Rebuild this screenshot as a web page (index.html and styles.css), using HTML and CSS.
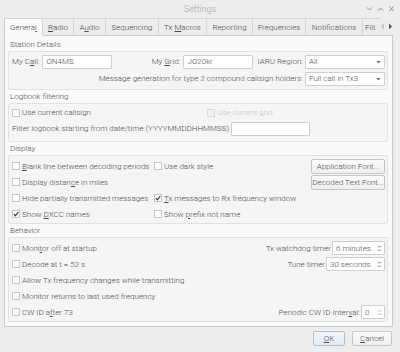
FILE: index.html
```html
<!DOCTYPE html>
<html lang="en">
<head>
    <meta charset="UTF-8">
    <title>Settings</title>
    <link rel="stylesheet" href="styles.css">
</head>
<body>
    <div class="titlebar">
        <span></span>
        <span class="title">Settings</span>
        <span class="wm">
            <svg width="7" height="6"><path d="M1 1.5 L3.5 4 L6 1.5" stroke="#8a8a8a" fill="none"/></svg>
            <svg width="7" height="6"><path d="M1 4.5 L3.5 2 L6 4.5" stroke="#8a8a8a" fill="none"/></svg>
            <svg width="7" height="6"><path d="M1.5 0.5 L5.5 5 M5.5 0.5 L1.5 5" stroke="#8a8a8a" fill="none"/></svg>
        </span>
    </div>

    <div class="tabbar">
        <div class="tab active" style="width:39px">Genera<u>l</u></div>
        <div class="tab" style="width:31px"><u>R</u>adio</div>
        <div class="tab" style="width:32px">A<u>u</u>dio</div>
        <div class="tab" style="width:53px">Sequencing</div>
        <div class="tab" style="width:48px">Tx <u>M</u>acros</div>
        <div class="tab" style="width:46px">Reporting</div>
        <div class="tab" style="width:53px">Frequencies</div>
        <div class="tab" style="width:57px">Notifications</div>
        <div class="tab cut" style="width:17px">Filt</div>
        <div class="scroller">
            <svg width="5" height="7"><path d="M4 0.5 L1 3.5 L4 6.5 Z" fill="#c4c4c4"/></svg>
            <svg width="5" height="7"><path d="M1 0.5 L4 3.5 L1 6.5 Z" fill="#555"/></svg>
        </div>
    </div>

    <div class="pane">
        <div class="section-title">Station Details</div>
        <div class="group">
            <div class="row">
                <span class="lbl">My C<u>a</u>ll:</span>
                <div class="field w-call"><span>ON4MS</span></div>
                <span class="spacer"></span>
                <span class="lbl">My <u>G</u>rid:</span>
                <div class="field w-call"><span>JO20kr</span></div>
                <span class="lbl gap-l">IARU Region:</span>
                <div class="field combo"><span>All</span> <svg width="5" height="4"><path d="M0.5 1 L4.5 1 L2.5 3.5 Z" fill="#666"/></svg></div>
            </div>
            <div class="row end">
                <span class="lbl">Message generation for type 2 compound callsign holders:</span>
                <div class="field combo"><span>Full call in Tx3</span> <svg width="5" height="4"><path d="M0.5 1 L4.5 1 L2.5 3.5 Z" fill="#666"/></svg></div>
            </div>
        </div>

        <div class="section-title">Logbook filtering</div>
        <div class="group log">
            <div class="row">
                <label class="check first-col"><span class="box"></span><span>Use current callsign</span></label>
                <label class="check disabled"><span class="box"></span><span>Use current grid</span></label>
            </div>
            <div class="row">
                <span class="lbl">Filter logbook starting from date/time (YYYYMMDDHHMMSS)</span>
                <div class="field w-date"></div>
            </div>
        </div>

        <div class="section-title">Display</div>
        <div class="group display">
            <label class="check"><span class="box"></span><span><u>B</u>lank line between decoding periods</span></label>
            <label class="check"><span class="box"></span><span>Use dark style</span></label>
            <div class="btn">Application Font...</div>

            <label class="check"><span class="box"></span><span>Display distan<u>c</u>e in miles</span></label>
            <span></span>
            <div class="btn">Decoded Text Font...</div>

            <label class="check"><span class="box"></span><span>Hide partially transmitted messages</span></label>
            <label class="check"><span class="box"><svg width="6" height="6"><path d="M0.8 3.2 L2.4 4.8 L5.3 1" stroke="#333" stroke-width="1.2" fill="none"/></svg></span><span><u>T</u>x messages to Rx frequency window</span></label>
            <span></span>

            <label class="check"><span class="box"><svg width="6" height="6"><path d="M0.8 3.2 L2.4 4.8 L5.3 1" stroke="#333" stroke-width="1.2" fill="none"/></svg></span><span>Show <u>D</u>XCC names</span></label>
            <label class="check"><span class="box"></span><span>Show <u>p</u>refix not name</span></label>
            <span></span>
        </div>

        <div class="section-title">Behavior</div>
        <div class="group behavior">
            <div class="brow">
                <label class="check"><span class="box"></span><span>Moni<u>t</u>or off at startup</span></label>
                <span class="spin-wrap"><span>Tx watchdog timer</span>
                    <span class="field spin w-watch"><span>6 minutes</span> <svg width="5" height="9"><path d="M1 3.5 L2.5 2 L4 3.5 M1 5.5 L2.5 7 L4 5.5" stroke="#777" fill="none"/></svg></span>
                </span>
            </div>
            <div class="brow">
                <label class="check"><span class="box"></span><span>Decode at t = 52 s</span></label>
                <span class="spin-wrap"><span>Tune timer</span>
                    <span class="field spin w-tune"><span>30 seconds</span> <svg width="5" height="9"><path d="M1 3.5 L2.5 2 L4 3.5 M1 5.5 L2.5 7 L4 5.5" stroke="#777" fill="none"/></svg></span>
                </span>
            </div>
            <div class="brow">
                <label class="check"><span class="box"></span><span>Allow Tx frequency changes while transmitting</span></label>
            </div>
            <div class="brow">
                <label class="check"><span class="box"></span><span>Monitor returns to last used frequency</span></label>
            </div>
            <div class="brow">
                <label class="check"><span class="box"></span><span>CW ID a<u>f</u>ter 73</span></label>
                <span class="spin-wrap"><span>Periodic CW ID Inter<u>v</u>al:</span>
                    <span class="field spin w-cw"><span>0</span> <svg width="5" height="9"><path d="M1 3.5 L2.5 2 L4 3.5 M1 5.5 L2.5 7 L4 5.5" stroke="#aaa" fill="none"/></svg></span>
                </span>
            </div>
        </div>
    </div>

    <div class="bottom">
        <div class="btn default w-ok"><span><u>O</u>K</span></div>
        <div class="btn w-cancel"><span><u>C</u>ancel</span></div>
    </div>
</body>
</html>
```

FILE: styles.css
```css
* {
    box-sizing: border-box;
}

body {
    margin: 0;
    width: 400px;
    height: 352px;
    overflow: hidden;
    background-color: #ededed;
    font-family: Roboto, "Liberation Sans", sans-serif;
    font-size: 8px;
    font-weight: 300;
    color: #4a4a4a;
}

u {
    text-decoration-thickness: 1px;
}

.titlebar {
    height: 18px;
    display: grid;
    grid-template-columns: 1fr auto 1fr;
    align-items: center;
}

.title {
    color: #a5a5a5;
    font-size: 9px;
}

.wm {
    justify-self: end;
    display: flex;
    gap: 4px;
    padding-right: 5px;
}

.tabbar {
    display: flex;
    height: 18px;
    margin-left: 4px;
}

.tab {
    height: 18px;
    line-height: 17px;
    text-align: center;
    background-color: #ececec;
    border-top: 1px solid #d4d4d4;
    border-right: 1px solid #d4d4d4;
    border-bottom: 1px solid #c9c9c9;
    white-space: nowrap;
    overflow: hidden;
}

.tab.active {
    background-color: #fafafa;
    border-left: 1px solid #c9c9c9;
    border-bottom-color: #fafafa;
}

.tab.cut {
    text-align: left;
    padding-left: 2px;
    border-right: none;
}

.scroller {
    width: 14px;
    display: flex;
    align-items: center;
    gap: 3px;
    border-bottom: 1px solid #c9c9c9;
    background-color: #ececec;
}

.pane {
    width: 389px;
    height: 291px;
    margin-left: 4px;
    padding: 2px 4px 0 3px;
    background-color: #fafafa;
    border: 1px solid #c9c9c9;
    border-top: none;
}

.section-title {
    height: 13px;
    line-height: 13px;
    padding-left: 2px;
}

.group {
    background-color: #f5f5f5;
    border: 1px solid #e2e2e2;
    border-radius: 2px;
    padding: 2px 2px 3px 3px;
}

.row {
    display: flex;
    align-items: center;
    height: 15px;
    margin-bottom: 2px;
}

.row:last-child {
    margin-bottom: 0;
}

.row.end {
    justify-content: flex-end;
}

.lbl {
    margin-right: 3px;
    white-space: nowrap;
}

.gap-l {
    margin-left: 4px;
}

.spacer {
    flex: 1;
}

.field {
    height: 14px;
    flex-shrink: 0;
    display: flex;
    align-items: center;
    justify-content: space-between;
    padding: 0 3px;
    background-color: #fff;
    border: 1px solid #cfcfcf;
    border-radius: 1px;
    white-space: nowrap;
}

.w-call {
    width: 70px;
}

.combo {
    width: 80px;
    margin-left: -1px;
}

.w-date {
    width: 79px;
    margin-left: -1px;
}

.log {
    padding-top: 1px;
    padding-bottom: 4px;
}

.log .row {
    margin-bottom: 1px;
}

.first-col {
    width: 195px;
}

.check {
    display: flex;
    align-items: center;
    white-space: nowrap;
}

.box {
    width: 8px;
    height: 8px;
    flex-shrink: 0;
    margin-right: 2px;
    background-color: #fff;
    border: 1px solid #c6c6c6;
    display: flex;
    align-items: center;
    justify-content: center;
}

.disabled {
    color: #bdbdbd;
}

.disabled .box {
    border-color: #d8d8d8;
    background-color: #f3f3f3;
}

.display {
    display: grid;
    grid-template-columns: 142px 1fr auto;
    grid-auto-rows: 16px;
    align-items: center;
    padding: 2px 2px 1px 3px;
}

.btn {
    height: 15px;
    display: flex;
    align-items: center;
    justify-content: center;
    padding: 0 3px;
    background: linear-gradient(#fbfbfb, #efefef);
    border: 1px solid #c6c6c6;
    border-radius: 2px;
    white-space: nowrap;
}

.display .btn {
    width: 74px;
}

.behavior {
    padding: 2px 2px 1px 3px;
}

.brow {
    height: 16px;
    display: flex;
    align-items: center;
    justify-content: space-between;
}

.spin-wrap {
    display: flex;
    align-items: center;
    gap: 1px;
    white-space: nowrap;
}

.spin {
    padding-right: 2px;
}

.w-watch {
    width: 53px;
}

.w-tune {
    width: 59px;
}

.w-cw {
    width: 24px;
}

.bottom {
    display: flex;
    justify-content: flex-end;
    gap: 7px;
    padding: 4px 8px 0 0;
}

.w-ok {
    width: 32px;
}

.w-cancel {
    width: 40px;
}

.btn.default {
    background: linear-gradient(#f2f6fa, #e2eaf2);
    border-color: #aebfd0;
}
```
